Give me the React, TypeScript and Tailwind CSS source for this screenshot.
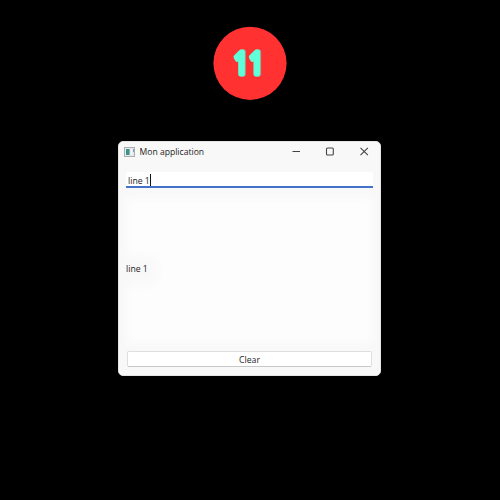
function Badge() {
  return (
    <svg className="block h-[74px] w-[74px]" viewBox="0 0 74 74" aria-label="11">
      <circle cx="37" cy="37.3" r="36.6" fill="#ff3131" />
      <g
        fontFamily="'Open Sans', 'Liberation Sans', sans-serif"
        fontWeight="600"
        fontSize="30"
        strokeWidth="4.8"
        strokeLinejoin="round"
        style={{ filter: "drop-shadow(1.4px 0 0.4px #a89a90)" }}
      >
        <text transform="scale(.8 1)" x="25.8 45" y="47.9" fill="#5effd9" stroke="#5effd9">
          11
        </text>
      </g>
    </svg>
  );
}

function TitleBar() {
  return (
    <header className="flex h-[20px] items-center pl-[5px] pr-[11px]">
      <svg className="mb-px h-[10px] w-[11px]" viewBox="0 0 11 10">
        <rect x="0.5" y="0.5" width="10" height="9" fill="#e6eaec" stroke="#a9aeb1" />
        <rect x="2" y="2" width="3" height="6" fill="#3f9189" />
        <rect x="5" y="2" width="1" height="6" fill="#8bb5b5" />
        <rect x="7" y="2" width="1" height="6" fill="#f8fbfb" />
        <rect x="9" y="2" width="1" height="3" fill="#7fa3b2" />
      </svg>
      <span className="ml-[4.5px] text-[8.6px] leading-none whitespace-nowrap text-[#222]">Mon application</span>
      <svg className="mb-px ml-auto h-[9px] w-[77px]" viewBox="0 0 77 9" fill="none" stroke="#444" strokeWidth="1.1">
        <path d="M0.5 4.5h7.5" />
        <rect x="34.5" y="1" width="6.8" height="7" rx="1" />
        <path d="M68.5 0.8l7.4 7.4M75.9 0.8l-7.4 7.4" />
      </svg>
    </header>
  );
}

export default function App() {
  return (
    <main className="flex h-[500px] w-[500px] flex-col items-center bg-black pt-[26px] font-['Open_Sans','Noto_Sans',sans-serif]">
      <Badge />
      <section className="mt-[41px] ml-[-1px] flex h-[235px] w-[263px] flex-col overflow-hidden rounded-[5px] border border-[#e4e4e4] bg-[#f8f8f8]">
        <TitleBar />
        <div className="mt-[10px] ml-[7px] flex h-[15.5px] w-[247px] items-center border-b-2 border-[#4273c8] bg-white pt-[3px] pl-[2px] text-[8.7px] leading-none text-[#222]">
          <span className="pt-[3px] whitespace-pre">line 1</span>
          <span className="mb-px h-[12px] w-px bg-[#111]" />
        </div>
        <div className="mx-[14px] mt-[16.5px] flex h-[133px] items-center bg-[#fdfdfd] text-[8.7px] leading-none text-[#222] shadow-[0_0_8px_6px_#fdfdfd]">
          <span className="-ml-[7px] bg-[#f8f8f8] pb-[2px] shadow-[0_0_12px_8px_#f8f8f8]">line 1</span>
        </div>
        <button className="mt-[14px] ml-[8px] flex h-[16px] w-[245px] items-center justify-center rounded-[2px] border border-[#dedede] border-b-[#c8c8c8] bg-white pt-[2px] text-[8.7px] leading-none text-[#222]">
          Clear
        </button>
      </section>
    </main>
  );
}
